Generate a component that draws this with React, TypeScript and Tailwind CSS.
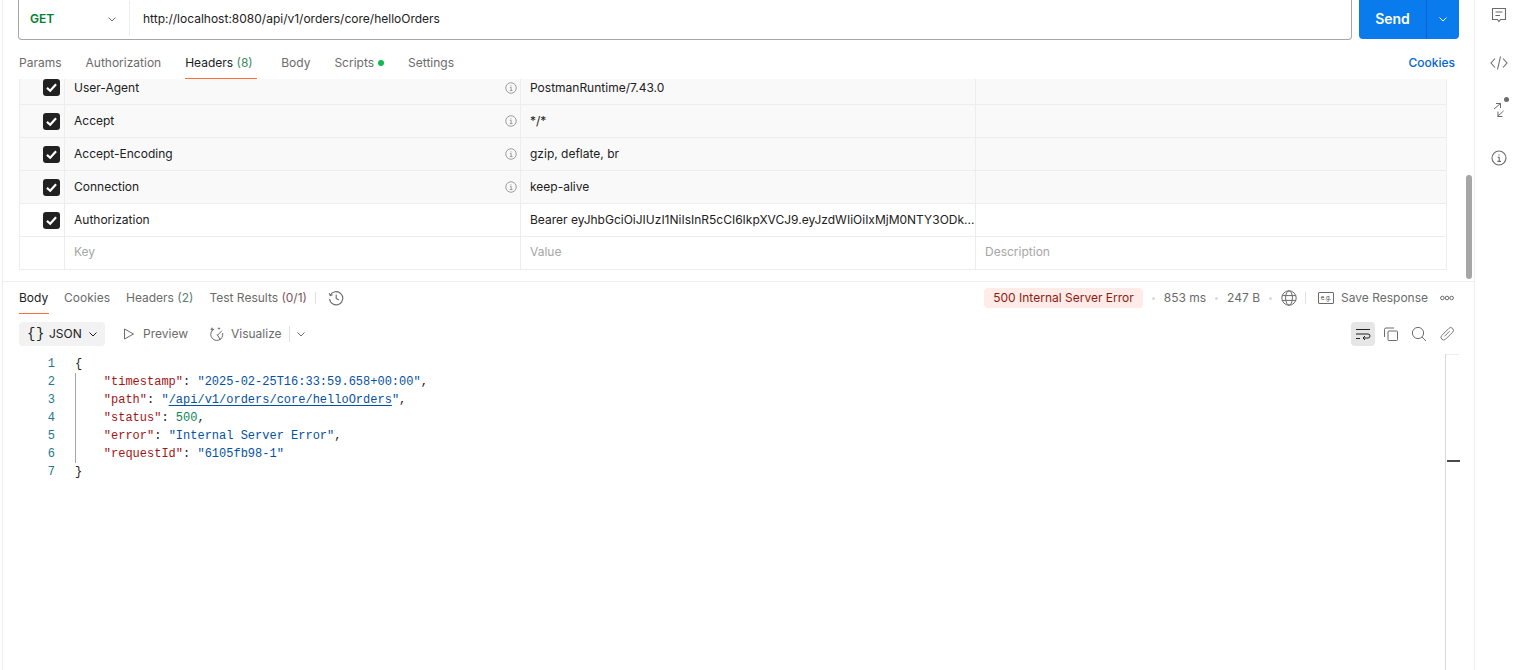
import React from "react";

const Info = ({ size = 12, color = "#8a8a8a" }: { size?: number; color?: string }) => (
  <svg width={size} height={size} viewBox="0 0 16 16" fill="none" stroke={color} strokeWidth="1.1">
    <circle cx="8" cy="8" r="7" />
    <path d="M6.6 7.2H8.2V11.4M6.4 11.4H10" />
    <circle cx="8" cy="4.9" r="0.7" fill={color} stroke="none" />
  </svg>
);

const Check = () => (
  <div className="w-[17px] h-[17px] rounded-[3px] bg-[#212121] flex items-center justify-center">
    <svg width="13" height="13" viewBox="0 0 12 12" fill="none" stroke="#fff" strokeWidth="2">
      <path d="M1.8 6.4L4.8 9L10.2 3" />
    </svg>
  </div>
);

const Chevron = ({ color = "#6b6b6b", size = 12 }: { color?: string; size?: number }) => (
  <svg width={size} height={size} viewBox="0 0 12 12" fill="none" stroke={color} strokeWidth="1">
    <path d="M2.5 4.5L6 8L9.5 4.5" />
  </svg>
);

const rows = [
  { k: "User-Agent", v: "PostmanRuntime/7.43.0", auto: true, first: true },
  { k: "Accept", v: "*/*", auto: true },
  { k: "Accept-Encoding", v: "gzip, deflate, br", auto: true },
  { k: "Connection", v: "keep-alive", auto: true },
  { k: "Authorization", v: "Bearer eyJhbGciOiJIUzI1NiIsInR5cCI6IkpXVCJ9.eyJzdWIiOiIxMjM0NTY3ODk...", auto: false },
];

const Key = ({ children }: { children: React.ReactNode }) => <span className="text-[#a31515]">{children}</span>;
const Str = ({ children }: { children: React.ReactNode }) => <span className="text-[#0451a5]">{children}</span>;

const codeLines: React.ReactNode[] = [
  <>{"{"}</>,
  <>{"    "}<Key>"timestamp"</Key>: <Str>"2025-02-25T16:33:59.658+00:00"</Str>,</>,
  <>{"    "}<Key>"path"</Key>: <Str>"<span className="underline underline-offset-2">/api/v1/orders/core/helloOrders</span>"</Str>,</>,
  <>{"    "}<Key>"status"</Key>: <span className="text-[#098658]">500</span>,</>,
  <>{"    "}<Key>"error"</Key>: <Str>"Internal Server Error"</Str>,</>,
  <>{"    "}<Key>"requestId"</Key>: <Str>"6105fb98-1"</Str></>,
  <>{"}"}</>,
];

export default function App() {
  return (
    <div className="relative flex w-[1522px] h-[670px] overflow-hidden bg-white text-[12px] text-[#212121] font-['Inter',sans-serif] leading-none">
      <div className="flex flex-col w-[1475px] shrink-0 border-r border-[#ededed] pl-[2px]">
        <div className="flex flex-col flex-1 border-l border-[#ededed]">
          {/* request bar */}
          <div className="flex h-10 shrink-0 pl-[15px] pr-[15px] gap-[7px]">
            <div className="flex items-center w-[1334px] h-10 border border-t-0 border-[#a6a6a6] rounded-b-[4px]">
              <div className="flex items-center w-[111px] h-[35px] mt-[-2px] border-r border-[#ededed] pl-[11px] pr-[11px] justify-between mr-[13px]">
                <span className="font-semibold text-[#007f31]">GET</span>
                <Chevron />
              </div>
              <span className="text-[#212121] mt-[-2px]">http://localhost:8080/api/v1/orders/core/helloOrders</span>
            </div>
            <div className="flex w-[100px] h-[39px] rounded-b-[4px] bg-[#097bed] text-white">
              <div className="flex flex-1 items-center justify-center border-r border-[#0265d2] text-[14px] font-semibold pb-[2px]">Send</div>
              <div className="flex w-8 items-center justify-center pb-[2px]"><Chevron color="#fff" /></div>
            </div>
          </div>

          {/* request tabs */}
          <div className="flex h-[39px] shrink-0 items-stretch pl-4 pr-[19px] gap-6 text-[#6b6b6b]">
            <span className="flex items-center pt-[6px]">Params</span>
            <span className="flex items-center pt-[6px]">Authorization</span>
            <span className="flex items-center w-[72px] border-b border-[#ff6c37] text-[#212121] pt-[7px]">Headers&nbsp;<span className="text-[#3d8a63]">(8)</span></span>
            <span className="flex items-center pt-[6px]">Body</span>
            <span className="flex items-center gap-[3px] pt-[6px]">Scripts<span className="w-[6px] h-[6px] rounded-full bg-[#0cbb52] ml-[1px]" /></span>
            <span className="flex items-center pt-[6px]">Settings</span>
            <span className="flex items-center ml-auto font-medium text-[#0265d2] pt-[6px]">Cookies</span>
          </div>

          {/* header table */}
          <div className="flex flex-col shrink-0 w-[1428px] ml-4 border-x border-b border-[#ededed]">
            {rows.map((r) => (
              <div key={r.k} className={`flex border-b border-[#ededed] ${r.first ? "h-[26px]" : "h-[33px]"} ${r.auto ? "bg-[#f9f9f9]" : "bg-white"}`}>
                <div className={`flex pl-[23px] w-[45px] border-r border-[#ededed] ${r.first ? "items-start" : "items-center"}`}>
                  <Check />
                </div>
                <div className={`flex justify-between w-[456px] border-r border-[#ededed] pl-[9px] pr-[3px] ${r.first ? "items-start pt-[3px]" : "items-center"}`}>
                  <span>{r.k}</span>
                  {r.auto && <Info />}
                </div>
                <div className={`flex w-[455px] border-r border-[#ededed] pl-[9px] ${r.first ? "items-start pt-[3px]" : "items-center"}`}>
                  <span className="whitespace-nowrap">{r.v}</span>
                </div>
                <div className="flex-1" />
              </div>
            ))}
            <div className="flex h-[32px] text-[#a6a6a6]">
              <div className="w-[45px] border-r border-[#ededed]" />
              <div className="flex items-center w-[456px] border-r border-[#ededed] pl-[9px] pb-[2px]">Key</div>
              <div className="flex items-center w-[455px] border-r border-[#ededed] pl-[9px] pb-[2px]">Value</div>
              <div className="flex items-center flex-1 pl-[9px] pb-[2px]">Description</div>
            </div>
          </div>

          <div className="h-[12px] shrink-0 border-b border-[#ededed]" />

          {/* response tabs */}
          <div className="flex h-[32px] shrink-0 items-stretch pl-4 pr-[20px] text-[#6b6b6b]">
            <span className="flex items-center w-[30px] border-b border-[#ff6c37] text-[#212121] mr-[15px] pt-px">Body</span>
            <span className="flex items-center mr-[16px]">Cookies</span>
            <span className="flex items-center mr-[16px]">Headers&nbsp;<span className="text-[#557f70]">(2)</span></span>
            <span className="flex items-center">Test Results&nbsp;<span className="text-[#7a5560]">(0/1)</span></span>
            <span className="self-center w-px h-[12px] bg-[#e0e0e0] mx-[8px]" />
            <span className="flex items-center ml-[4px]">
              <svg width="16" height="16" viewBox="0 0 16 16" fill="none" stroke="#6b6b6b" strokeWidth="1.1">
                <path d="M2.2 5.4A6.6 6.6 0 1 1 1.6 9" />
                <path d="M1.2 3.2L2.2 5.6L4.6 4.8M8.2 4.6V8.4L10.8 10" />
              </svg>
            </span>
            <div className="flex items-center ml-auto">
              <span className="flex items-center h-[20px] px-[9px] rounded-[4px] bg-[#ffebe7] text-[#8e1a10]">500 Internal Server Error</span>
              <span className="w-[3px] h-[3px] rounded-full bg-[#d9d9d9] mx-[9px]" />
              <span className="text-[#6b6b6b]">853 ms</span>
              <span className="w-[3px] h-[3px] rounded-full bg-[#d9d9d9] mx-[9px]" />
              <span className="text-[#6b6b6b]">247 B</span>
              <span className="w-[3px] h-[3px] rounded-full bg-[#d9d9d9] mx-[9px]" />
              <svg width="16" height="16" viewBox="0 0 16 16" fill="none" stroke="#6b6b6b" strokeWidth="1">
                <circle cx="8" cy="8" r="7.2" />
                <ellipse cx="8" cy="8" rx="3.4" ry="7.2" />
                <path d="M1.2 5.6H14.8M1.2 10.4H14.8" />
              </svg>
              <span className="w-px h-[12px] bg-[#e0e0e0] ml-[8px] mr-[12px]" />
              <span className="flex items-center justify-center w-[16px] h-[12px] border border-[#6b6b6b] rounded-[1px] text-[6px] text-[#3b3b3b] mr-[7px]">e.g.</span>
              <span className="text-[#6b6b6b] mr-[12px]">Save Response</span>
              <svg width="14" height="6" viewBox="0 0 14 6" fill="none" stroke="#6b6b6b" strokeWidth="1">
                <circle cx="2.4" cy="3" r="1.8" />
                <circle cx="7" cy="3" r="1.8" />
                <circle cx="11.6" cy="3" r="1.8" />
              </svg>
            </div>
          </div>

          {/* response toolbar */}
          <div className="flex h-[24px] shrink-0 mt-[8px] items-center pl-4 pr-[19px] text-[#6b6b6b]">
            <div className="flex items-center w-[86px] h-[24px] rounded-[4px] bg-[#f2f2f2] text-[#212121] pl-[8px] mr-[18px]">
              <span className="text-[14px] font-['Liberation_Mono',monospace] tracking-[0.6px] mr-[4px] w-[18px] whitespace-nowrap">{"{}"}</span>
              <span className="mr-[5px]">JSON</span>
              <Chevron color="#212121" />
            </div>
            <svg width="12" height="12" viewBox="0 0 12 12" fill="none" stroke="#6b6b6b" strokeWidth="1" className="mr-[8px]">
              <path d="M1.5 1L10.5 6L1.5 11Z" />
            </svg>
            <span className="mr-[21px]">Preview</span>
            <svg width="16" height="16" viewBox="0 0 16 16" fill="none" stroke="#6b6b6b" strokeWidth="1" className="mr-[6px]">
              <path d="M5.2 3A6 6 0 1 0 13.6 7" />
              <path d="M8.6 9.2L13 4.6M8 8.4L11.6 14" />
              <path d="M3 1L3.6 2.6L5 3.2L3.6 3.8L3 5.2L2.4 3.8L1 3.2L2.4 2.6Z M10 1L10.5 2L11.5 2.5L10.5 3L10 4L9.5 3L8.5 2.5L9.5 2Z" fill="#6b6b6b" stroke="none" />
            </svg>
            <span>Visualize</span>
            <span className="w-px h-[16px] bg-[#e0e0e0] ml-[7px] mr-[5px]" />
            <Chevron />
            <div className="flex items-center ml-auto">
              <span className="flex items-center justify-center w-6 h-6 rounded-[4px] bg-[#e6e6e6] mr-[8px]">
                <svg width="16" height="16" viewBox="0 0 16 16" fill="none" stroke="#212121" strokeWidth="1">
                  <path d="M1 3.5H15M1 8H13A2 2 0 0 1 13 12H8M1 12.5H5" />
                  <path d="M10 10L8 12L10 14" />
                </svg>
              </span>
              <svg width="16" height="16" viewBox="0 0 16 16" fill="none" stroke="#6b6b6b" strokeWidth="1" className="mr-[12px]">
                <rect x="5" y="5" width="9.5" height="9.5" rx="1" />
                <path d="M11 2H3A1.5 1.5 0 0 0 1.5 3.5V11" />
              </svg>
              <svg width="16" height="16" viewBox="0 0 16 16" fill="none" stroke="#6b6b6b" strokeWidth="1" className="mr-[12px]">
                <circle cx="7" cy="7" r="5.6" />
                <path d="M11 11L15 15" />
              </svg>
              <svg width="16" height="16" viewBox="0 0 16 16" fill="none" stroke="#6b6b6b" strokeWidth="0.9">
                <path d="M9.6 2.6L2.8 9.4A2.6 2.6 0 0 0 6.6 13.2L13.6 6.2A2.6 2.6 0 0 0 9.8 2.4M10.6 5.2L5.4 10.4" />
              </svg>
            </div>
          </div>

          {/* code */}
          <div className="flex flex-1 mt-2 pl-4 pr-[28px]">
            <div className="flex-1 flex pt-[1px] font-['Liberation_Mono',monospace] text-[12px] leading-[18px]">
              <div className="w-[36px] text-right text-[#237893]">
                {codeLines.map((_, i) => <div key={i}>{i + 1}</div>)}
              </div>
              <div className="relative ml-[20px] whitespace-pre text-[#212121]">
                <span className="absolute left-0 top-[18px] h-[90px] w-px bg-[#a6a6a6]" />
                {codeLines.map((l, i) => <div key={i}>{l}</div>)}
              </div>
            </div>
            <div className="w-px border-l border-[#d9d9d9] relative">
              <span className="absolute left-0 top-0 w-[13px] h-px bg-[#ededed]" />
              <span className="absolute left-[1px] top-[106px] w-[13px] h-[2px] bg-[#4a4a4a]" />
            </div>
          </div>
        </div>
      </div>

      {/* overlay scrollbar */}
      <span className="absolute left-[1466px] top-[175px] w-[6px] h-[104px] rounded-full bg-[#a6a6a6]" />

      {/* right rail */}
      <div className="flex flex-col items-center w-[47px] pt-[7px] pl-0 gap-[31.5px] text-[#6b6b6b]">
        <svg width="16" height="16" viewBox="0 0 16 16" fill="none" stroke="#6b6b6b" strokeWidth="1.1">
          <path d="M1.5 1.5H14.5V12.5H9.5L8 14.5L6.5 12.5H1.5Z" />
          <path d="M4.5 5H11.5M4.5 8.5H9" />
        </svg>
        <svg width="18" height="16" viewBox="0 0 18 16" fill="none" stroke="#6b6b6b" strokeWidth="1.1">
          <path d="M5 3.5L1 8L5 12.5M13 3.5L17 8L13 12.5M10.5 1.5L7.5 14.5" />
        </svg>
        <div className="relative w-4 h-4">
          <svg width="16" height="16" viewBox="0 0 16 16" fill="none" stroke="#6b6b6b" strokeWidth="1">
            <path d="M3 7L9.5 1.5M5 1.5H9.5V6M12.5 9L6.5 14.5M7 9.5V14.5H11.5" />
          </svg>
          <span className="absolute left-[13px] top-[-5px] w-[5px] h-[5px] rounded-full bg-[#6b6b6b]" />
        </div>
        <Info size={16} color="#6b6b6b" />
      </div>
    </div>
  );
}
